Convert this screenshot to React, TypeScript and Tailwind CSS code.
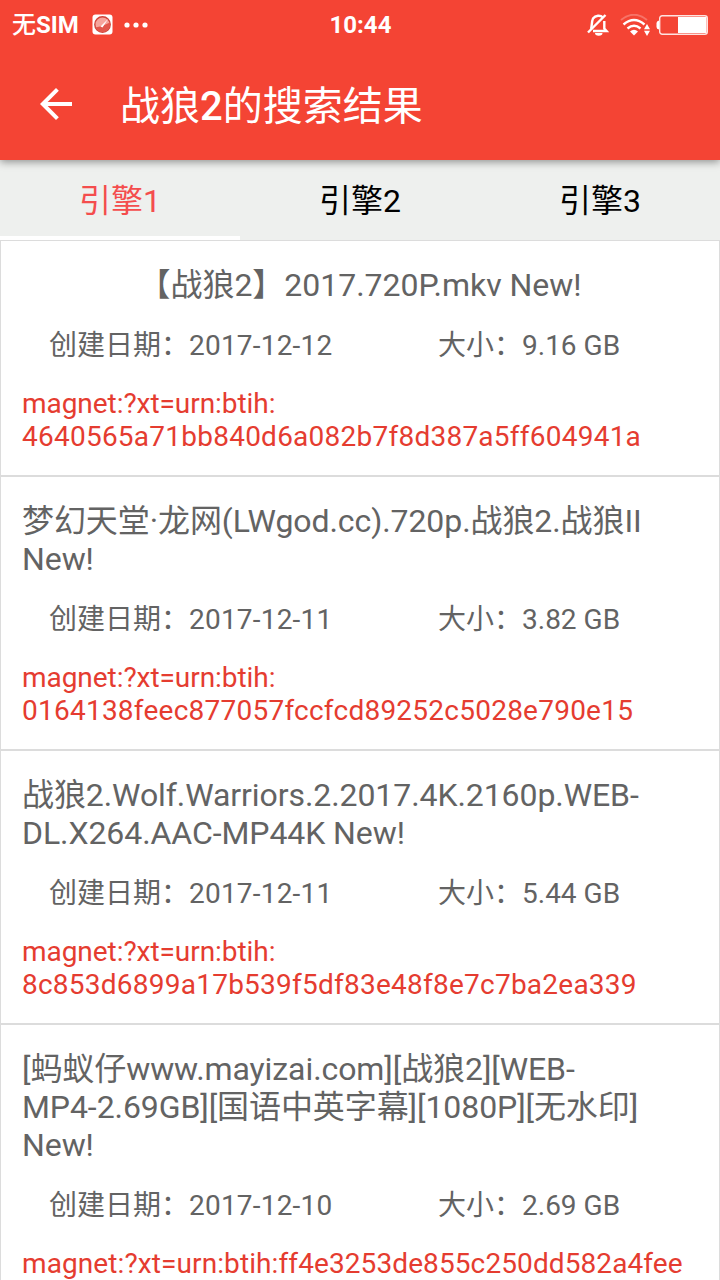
import React from 'react';

interface Result {
  title: string[];
  date: string;
  size: string;
  magnet: string[];
  centered?: boolean;
}

const TABS = ['引擎1', '引擎2', '引擎3'];

const RESULTS: Result[] = [
  {
    title: ['【战狼2】2017.720P.mkv New!'],
    date: '2017-12-12',
    size: '9.16 GB',
    magnet: ['magnet:?xt=urn:btih:', '4640565a71bb840d6a082b7f8d387a5ff604941a'],
    centered: true,
  },
  {
    title: ['梦幻天堂·龙网(LWgod.cc).720p.战狼2.战狼II', 'New!'],
    date: '2017-12-11',
    size: '3.82 GB',
    magnet: ['magnet:?xt=urn:btih:', '0164138feec877057fccfcd89252c5028e790e15'],
  },
  {
    title: ['战狼2.Wolf.Warriors.2.2017.4K.2160p.WEB-', 'DL.X264.AAC-MP44K New!'],
    date: '2017-12-11',
    size: '5.44 GB',
    magnet: ['magnet:?xt=urn:btih:', '8c853d6899a17b539f5df83e48f8e7c7ba2ea339'],
  },
  {
    title: ['[蚂蚁仔www.mayizai.com][战狼2][WEB-', 'MP4-2.69GB][国语中英字幕][1080P][无水印]', 'New!'],
    date: '2017-12-10',
    size: '2.69 GB',
    magnet: ['magnet:?xt=urn:btih:ff4e3253de855c250dd582a4fee'],
  },
];

const StatusBar: React.FC = () => (
  <div className="grid h-12 grid-cols-3 items-center pl-3 pr-[11px] text-2xl leading-[48px]">
    <div className="flex items-center">
      <span className="whitespace-nowrap font-medium">无<span className="font-bold">SIM</span></span>
      <svg className="ml-[13px] shrink-0" width="21" height="21" viewBox="0 0 21 21">
        <rect x="0.5" y="0.5" width="20" height="20" rx="3" fill="#fff" />
        <circle cx="10.5" cy="10.5" r="7.7" fill="#f6a59d" stroke="#d0443a" strokeWidth="1.4" />
        <path d="M3.500 13.500a7.700 7.700 0 0 0 14.500-5L10 12Z" fill="#e2574c" />
        <path d="M8.500 12.500 16 5l-5.500 8.500Z" fill="#fff" />
      </svg>
      <svg className="ml-[11px] shrink-0" width="24" height="6" viewBox="0 0 24 6" fill="#fff">
        <circle cx="3" cy="3" r="2.6" />
        <circle cx="12" cy="3" r="2.6" />
        <circle cx="21" cy="3" r="2.6" />
      </svg>
    </div>
    <div className="pt-px text-center font-bold">10:44</div>
    <div className="flex items-center justify-end">
      {/* muted bell */}
      <svg width="22" height="22" viewBox="0 0 22 22" fill="none" stroke="#fff">
        <path d="M16 3.500C13.500 1 8.500 1 6 4.500C4.500 7.500 5 12.500 4 15M17.300 7V14.500L19.500 17H6" strokeWidth="2.400" />
        <path d="M1 18.500 18.500 1" strokeWidth="2.400" />
        <path d="M8 19h7.500a3.700 2.700 0 0 1-7.500 0Z" fill="#fff" stroke="none" />
      </svg>
      {/* wifi with traffic arrows */}
      <svg className="ml-[11px]" width="30" height="22" viewBox="0 0 30 22" fill="none" stroke="#fff">
        <path d="M1 6Q14-4.500 27 6" strokeWidth="2" opacity="0.25" />
        <path d="M3.500 10.500Q14 1.500 24.500 10.500" strokeWidth="2.400" />
        <path d="M7.500 14.500Q14 9 20.500 14.500" strokeWidth="2.400" />
        <path d="M10 17.500Q14 14.200 18 17.500L14 21.500Z" fill="#fff" stroke="none" />
        <path d="M27 10l3 5.300h-6ZM27 22l3-5.300h-6Z" fill="#fff" stroke="none" />
      </svg>
      <svg className="ml-[6px]" width="53" height="22" viewBox="0 0 53 22">
        <path d="M3 6.500Q0.500 7 0.500 9v4q0 2 2.500 2.500Z" fill="#fff" />
        <rect x="3.700" y="1.700" width="47.600" height="18.600" rx="2.500" fill="none" stroke="#fff" strokeOpacity="0.850" strokeWidth="1.400" />
        <path d="M22 3h28.500v16H22Z" fill="#fff" />
      </svg>
    </div>
  </div>
);

const ResultItem: React.FC<{ item: Result }> = ({ item }) => (
  <li className="border border-[#dcdcdc] bg-white px-[21px] pt-[25px] pb-[22px]">
    <h2 className={`text-[32px] leading-[38px] whitespace-nowrap ${item.centered ? 'text-center tracking-[-0.03px]' : 'tracking-[-0.08px]'}`}>
      {item.title.map((line) => (
        <span key={line} className="block">{line}</span>
      ))}
    </h2>
    <div className="mt-[25px] flex pl-[27px] text-[28px] leading-[33px]">
      <span className="w-[389px]">创建日期：<span className="tracking-[0.2px]">{item.date}</span></span>
      <span>大小：{item.size}</span>
    </div>
    <p className="mt-[25px] whitespace-nowrap text-[28px] leading-[33px] text-[#e53c30]">
      {item.magnet.map((line) => (
        <span
          key={line}
          className={`block ${line.endsWith(':') ? 'tracking-[-0.05px]' : line.startsWith('magnet') ? 'tracking-[0.1px]' : 'tracking-[0.24px]'}`}
        >
          {line}
        </span>
      ))}
    </p>
  </li>
);

const App: React.FC = () => {
  return (
    <div className="flex h-[1280px] w-[720px] flex-col overflow-hidden bg-white font-[Roboto,'Noto_Sans_CJK_SC',sans-serif] text-[#636363]" lang="zh-CN">
      <header className="relative z-10 h-40 shrink-0 bg-[#f44434] text-white shadow-[0_2px_8px_rgba(0,0,0,0.4)]">
        <StatusBar />
        <div className="flex h-28 items-center pl-8">
          <svg width="48" height="48" viewBox="0 0 24 24" fill="#fff">
            <path d="M20 11H7.830l5.590-5.590L12 4l-8 8 8 8 1.410-1.410L7.830 13H20v-2z" />
          </svg>
          <h1 className="ml-10 pt-[5px] text-[40px] leading-[48px]">
            战狼<span className="font-medium">2</span>的搜索结果
          </h1>
        </div>
      </header>

      <nav className="grid h-20 shrink-0 grid-cols-3 bg-[#eef0ee] text-[32px] text-black">
        {TABS.map((tab, i) => (
          <div
            key={tab}
            className={`h-20 border-b-4 pt-[6px] text-center leading-[71px] ${i === 0 ? 'border-white text-[#f44d4d]' : 'border-transparent'}`}
          >
            {tab}
          </div>
        ))}
      </nav>

      <ul className="shrink-0">
        {RESULTS.map((item) => (
          <ResultItem key={item.magnet.join('')} item={item} />
        ))}
      </ul>
    </div>
  );
};

export default App;
